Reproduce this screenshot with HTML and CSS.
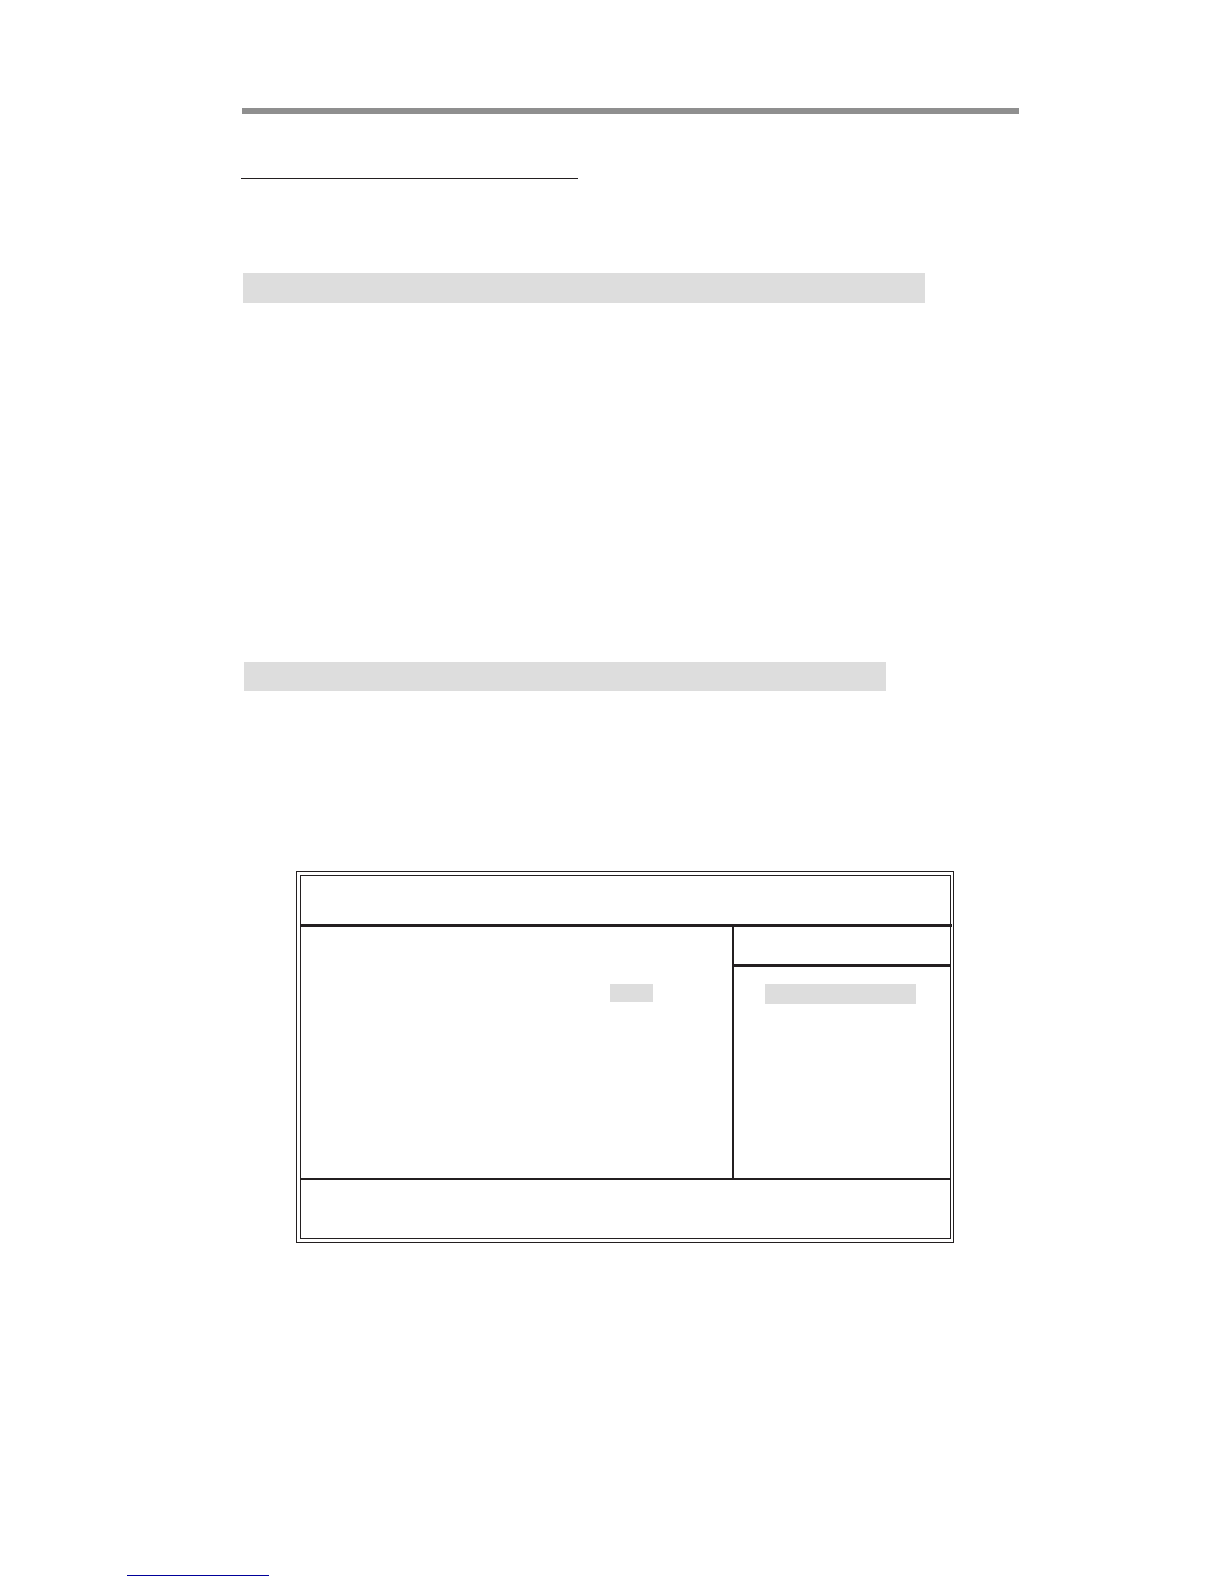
FILE: index.html
```
<!DOCTYPE html>
<html lang="en">
<head>
    <meta charset="UTF-8">
    <meta name="viewport" content="width=device-width, initial-scale=1">
    <title>Setup</title>
    <link rel="stylesheet" href="styles.css">
</head>
<body>
    <div class="main">
        <hr class="top-rule">
        <hr class="title-rule">
        <div class="band band-first"></div>
        <div class="band band-second"></div>

        <!-- setup screen frame -->
        <div class="screen">
            <div class="screen-inner">
                <div class="screen-head"></div>
                <div class="screen-body">
                    <div class="items">
                        <div class="value"></div>
                    </div>
                    <div class="help">
                        <div class="help-head"></div>
                        <div class="help-level"></div>
                    </div>
                </div>
                <div class="screen-keys"></div>
            </div>
        </div>
    </div>
    <div class="footer">
        <hr class="footer-rule">
    </div>
</body>
</html>
```
FILE: styles.css
```
*{margin: 0;padding: 0;box-sizing: border-box}
body{
    display: flex;
    flex-direction: column;
    min-height: 100vh;
    background-color: #fff;
    font-family: "Liberation Sans", Arial, sans-serif;
}
hr{
    border: 0;
}
.main{
    padding: 108px 205px 0 241px;
}
.top-rule{
    height: 6px;
    margin-left: 1px;
    background-color: #8f8f8f;
}
.title-rule{
    width: 337px;
    height: 1px;
    margin-top: 64px;
    background-color: #231f20;
}
.band{
    background-color: #ddd;
}
.band-first{
    height: 30px;
    margin: 94px 94px 0 2px;
}
.band-second{
    height: 29px;
    margin: 359px 133px 0 3px;
}
.screen{
    margin: 180px 65px 0 55px;
    padding: 3px 2px 3px 3px;
    border: 1px solid #231f20;
}
.screen-inner{
    border: 1px solid #231f20;
}
.screen-head{
    height: 51px;
    margin-right: -2px;
    border-bottom: 3px solid #231f20;
}
.screen-body{
    display: grid;
    grid-template-columns: 2fr 1fr;
    min-height: 253px;
    border-bottom: 2px solid #231f20;
}
.items{
    padding: 57px 79px 0 0;
    border-right: 2px solid #231f20;
}
.value{
    width: 43px;
    height: 18px;
    margin-left: auto;
    background-color: #ddd;
}
.help-head{
    height: 40px;
    border-bottom: 3px solid #231f20;
}
.help-level{
    height: 20px;
    margin: 17px 34px 0 31px;
    background-color: #ddd;
}
.screen-keys{
    height: 58px;
}
.footer{
    margin-top: auto;
    padding: 0 127px 8px;
}
.footer-rule{
    width: 142px;
    height: 1px;
    background-color: #00009a;
}
```
